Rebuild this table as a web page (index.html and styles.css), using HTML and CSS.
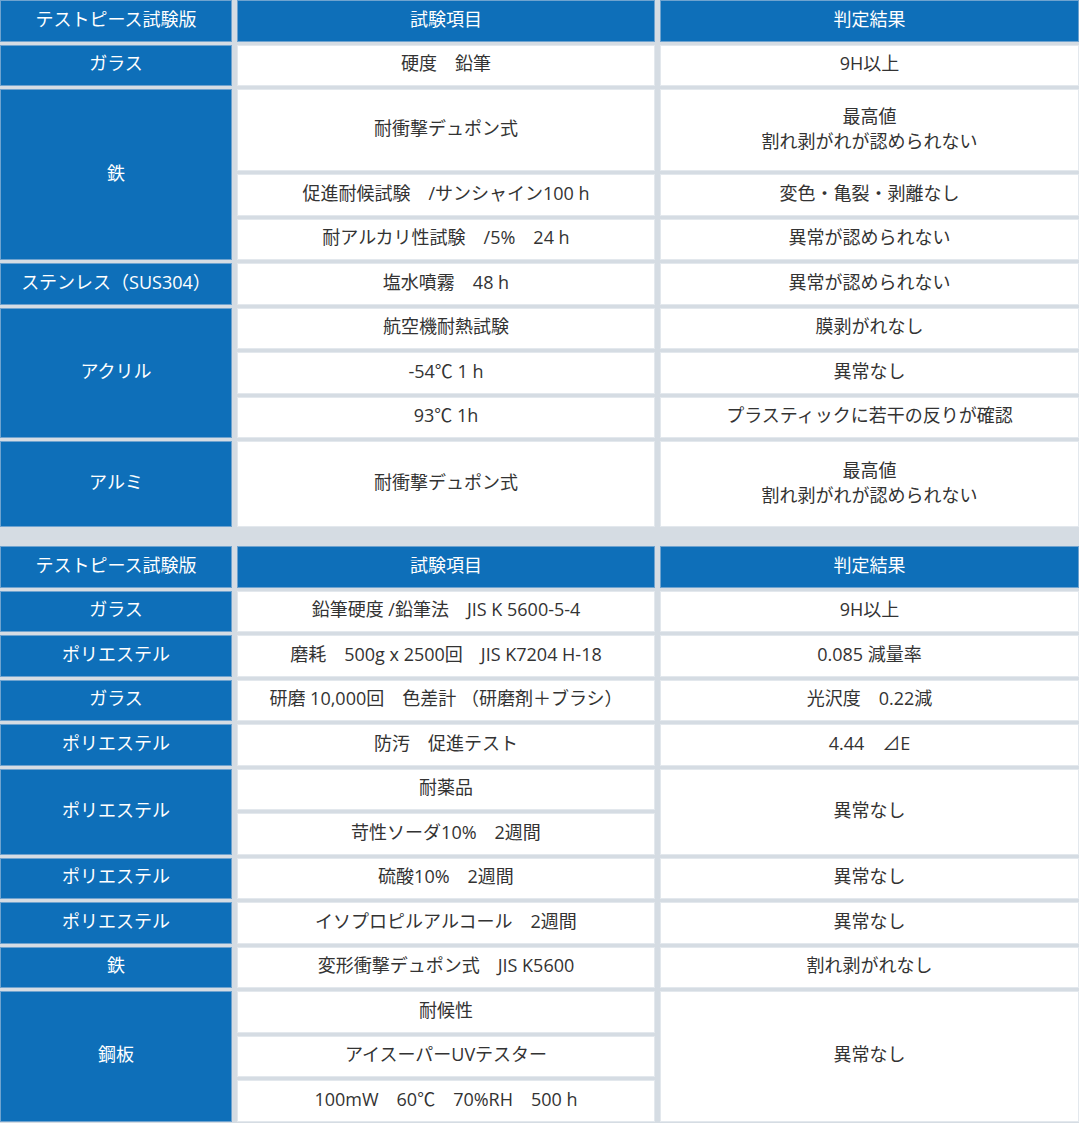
FILE: index.html
```html
<!DOCTYPE html>
<html lang="ja">
<head>
<meta charset="utf-8">
<title>試験結果</title>
<link rel="stylesheet" href="styles.css">
</head>
<body>
<div class="wrap">
  <table class="spec first">
    <colgroup><col class="c1"><col class="c2"><col class="c3"></colgroup>
    <tr class="r"><th>テストピース試験版</th><th>試験項目</th><th>判定結果</th></tr>
    <tr class="r"><th>ガラス</th><td>硬度　鉛筆</td><td>9H以上</td></tr>
    <tr class="r2"><th rowspan="3">鉄</th><td>耐衝撃デュポン式</td><td class="two">最高値<br>割れ剥がれが認められない</td></tr>
    <tr class="r"><td>促進耐候試験　/サンシャイン100 h</td><td>変色・亀裂・剥離なし</td></tr>
    <tr class="r"><td>耐アルカリ性試験　/5%　24 h</td><td>異常が認められない</td></tr>
    <tr class="r"><th>ステンレス（SUS304）</th><td>塩水噴霧　48 h</td><td>異常が認められない</td></tr>
    <tr class="r"><th rowspan="3">アクリル</th><td>航空機耐熱試験</td><td>膜剥がれなし</td></tr>
    <tr class="r"><td>-54℃ 1 h</td><td>異常なし</td></tr>
    <tr class="r"><td>93℃ 1h</td><td>プラスティックに若干の反りが確認</td></tr>
    <tr class="r3"><th>アルミ</th><td>耐衝撃デュポン式</td><td class="two">最高値<br>割れ剥がれが認められない</td></tr>
  </table>

  <table class="spec second">
    <colgroup><col class="c1"><col class="c2"><col class="c3"></colgroup>
    <tr class="r"><th>テストピース試験版</th><th>試験項目</th><th>判定結果</th></tr>
    <tr class="r"><th>ガラス</th><td>鉛筆硬度 /鉛筆法　JIS K 5600-5-4</td><td>9H以上</td></tr>
    <tr class="r"><th>ポリエステル</th><td>磨耗　500g x 2500回　JIS K7204 H-18</td><td>0.085 減量率</td></tr>
    <tr class="r"><th>ガラス</th><td>研磨 10,000回　色差計 （研磨剤＋ブラシ）</td><td>光沢度　0.22減</td></tr>
    <tr class="r"><th>ポリエステル</th><td>防汚　促進テスト</td><td>4.44　⊿E</td></tr>
    <tr class="r"><th rowspan="2">ポリエステル</th><td>耐薬品</td><td rowspan="2">異常なし</td></tr>
    <tr class="r"><td>苛性ソーダ10%　2週間</td></tr>
    <tr class="r"><th>ポリエステル</th><td>硫酸10%　2週間</td><td>異常なし</td></tr>
    <tr class="r"><th>ポリエステル</th><td>イソプロピルアルコール　2週間</td><td>異常なし</td></tr>
    <tr class="r"><th>鉄</th><td>変形衝撃デュポン式　JIS K5600</td><td>割れ剥がれなし</td></tr>
    <tr class="r"><th rowspan="3">鋼板</th><td>耐候性</td><td rowspan="3">異常なし</td></tr>
    <tr class="r"><td>アイスーパーUVテスター</td></tr>
    <tr class="r"><td>100mW　60℃　70%RH　500 h</td></tr>
  </table>
</div>
</body>
</html>
```

FILE: styles.css
```css
html, body {
  margin: 0;
  padding: 0;
  background: #d5dce3;
}

.wrap {
  width: 1079px;
  overflow: hidden;
}

.spec {
  border-collapse: separate;
  border-spacing: 5px 3px;
  table-layout: fixed;
  width: 1089px;
  margin: -3px -5px 0 -5px;
  font-family: "Open Sans", "Noto Sans CJK JP", sans-serif;
  font-size: 18px;
  line-height: 21px;
  color: #333;
}

.spec.second {
  margin-top: 13px;
}

.c1 { width: 232px; }
.c2 { width: 418px; }
.c3 { width: 419px; }

.spec th,
.spec td {
  padding: 0 4px 3px;
  text-align: center;
  vertical-align: middle;
  font-weight: normal;
  box-sizing: border-box;
}

.spec th {
  background: #0e6fb9;
  color: #fff;
  border: 1px solid #6fa3cf;
}

.spec td {
  background: #fff;
  border: 1px solid #e3e8ed;
}

.spec td.two {
  line-height: 25px;
}

.r { height: 41.5px; }
.r2 { height: 82px; }
.r3 { height: 86px; }
```
